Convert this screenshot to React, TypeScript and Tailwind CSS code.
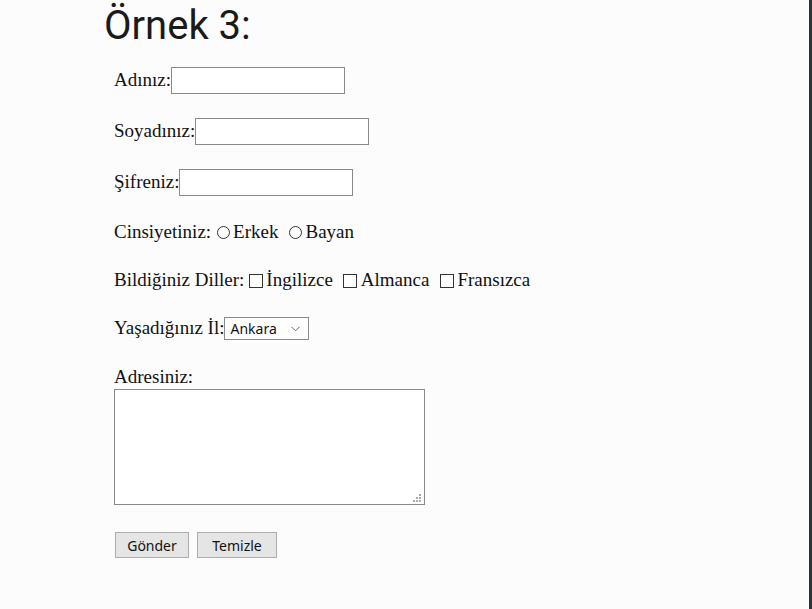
import React from "react"

const serif = { fontFamily: '"Liberation Serif", "Times New Roman", serif' }
const ui = { fontFamily: '"Noto Sans", "Open Sans", sans-serif' }

function Radio({ className = "" }: { className?: string }) {
  return (
    <span
      className={`inline-block w-[13px] h-[13px] rounded-full border border-[#333] bg-white shrink-0 ${className}`}
    />
  )
}

function Check({ className = "" }: { className?: string }) {
  return <span className={`inline-block w-[14px] h-[14px] border border-[#333] bg-white shrink-0 ${className}`} />
}

function TextBox({ width }: { width: string }) {
  return <input type="text" className={`${width} h-[27px] border border-[#8a8a8a] bg-white outline-none px-1`} />
}

export default function App() {
  return (
    <div className="flex h-[609px] w-[812px] bg-[#fcfcfc] overflow-hidden">
      <div className="flex-1 flex flex-col pl-[114px] text-[19px] text-[#111]" style={serif}>
        <h1
          className="-ml-[10px] pt-[2px] h-[50px] leading-[48px] text-[40px] font-normal text-[#1a1a1a]"
          style={{ fontFamily: 'Roboto, "Noto Sans", sans-serif' }}
        >
          Örnek 3:
        </h1>

        <div className="mt-[17px] h-[27px] flex items-center">
          <span>Adınız:</span>
          <TextBox width="w-[174px]" />
        </div>

        <div className="mt-[24px] h-[27px] flex items-center">
          <span>Soyadınız:</span>
          <TextBox width="w-[174px]" />
        </div>

        <div className="mt-[24px] h-[27px] flex items-center">
          <span>Şifreniz:</span>
          <TextBox width="w-[174px]" />
        </div>

        <div className="mt-[23px] h-[27px] flex items-center">
          <span>Cinsiyetiniz:</span>
          <Radio className="ml-[6px] mr-[3px]" />
          <span>Erkek</span>
          <Radio className="ml-[11px] mr-[3px]" />
          <span>Bayan</span>
        </div>

        <div className="mt-[21px] h-[27px] flex items-center">
          <span>Bildiğiniz Diller:</span>
          <Check className="ml-[5px] mr-[3px]" />
          <span>İngilizce</span>
          <Check className="ml-[10px] mr-[4px]" />
          <span>Almanca</span>
          <Check className="ml-[11px] mr-[3px]" />
          <span>Fransızca</span>
        </div>

        <div className="mt-[23px] h-[23px] flex items-center">
          <span>Yaşadığınız İl:</span>
          <div
            className="w-[85px] h-[23px] border border-[#8a8a8a] bg-white flex items-center justify-between pl-[5px] pr-[8px] text-[14px] text-[#111]"
            style={ui}
          >
            <span>Ankara</span>
            <svg width="9" height="6" viewBox="0 0 9 6" fill="none">
              <path d="M0.5 0.8 L4.5 4.8 L8.5 0.8" stroke="#666" strokeWidth="1" />
            </svg>
          </div>
        </div>

        <div className="mt-[26px] h-[22px] flex items-center">
          <span>Adresiniz:</span>
        </div>

        <div className="mt-[1px] relative w-[311px] h-[116px]">
          <textarea className="w-full h-full border border-[#8a8a8a] bg-white resize-none outline-none" />
          <svg className="absolute right-[4px] bottom-[3px]" width="9" height="9" viewBox="0 0 9 9">
            <rect x="7" y="1" width="2" height="2" fill="#aaa" />
            <rect x="4" y="4" width="2" height="2" fill="#aaa" />
            <rect x="7" y="4" width="2" height="2" fill="#aaa" />
            <rect x="1" y="7" width="2" height="2" fill="#aaa" />
            <rect x="4" y="7" width="2" height="2" fill="#aaa" />
            <rect x="7" y="7" width="2" height="2" fill="#aaa" />
          </svg>
        </div>

        <div className="mt-[27px] flex gap-[8px] pl-[1px]" style={ui}>
          <button className="w-[74px] h-[26px] border border-[#adadad] bg-[#e5e5e5] text-[14px] text-[#111]">
            Gönder
          </button>
          <button className="w-[80px] h-[26px] border border-[#adadad] bg-[#e5e5e5] text-[14px] text-[#111]">
            Temizle
          </button>
        </div>
      </div>
      <div className="w-[3px] h-full bg-[#2b3436]" />
    </div>
  )
}
